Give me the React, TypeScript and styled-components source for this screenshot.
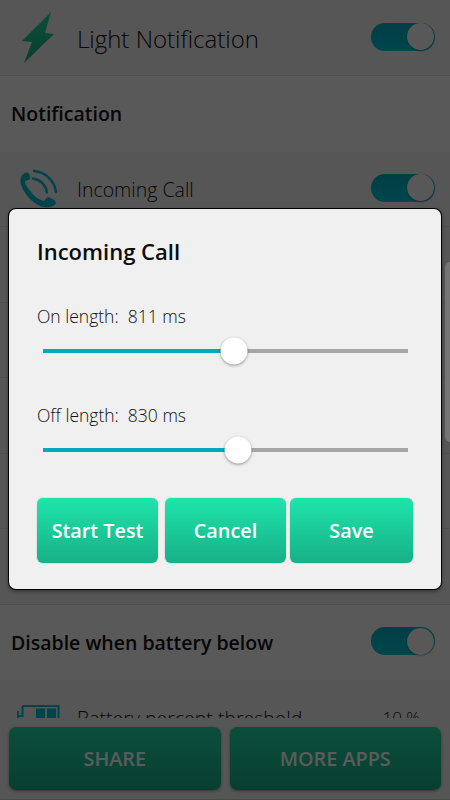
import styled, { createGlobalStyle } from "styled-components";

const GlobalStyle = createGlobalStyle`
  html, body {
    margin: 0;
    padding: 0;
    background: #f0f0f0;
  }
  * {
    box-sizing: border-box;
  }
`;

const sliders = [
  { label: "On length:  811 ms", percent: 52.2 },
  { label: "Off length:  830 ms", percent: 53.3 },
];

const hiddenRows = [0, 1, 2, 3, 4];

const BoltIcon = () => (
  <svg width="60" height="76" viewBox="0 0 60 76">
    <defs>
      <linearGradient id="bolt" x1="0" y1="0" x2="0" y2="1">
        <stop offset="0" stopColor="#1fdca6" />
        <stop offset="1" stopColor="#17ad87" />
      </linearGradient>
    </defs>
    <polygon
      points="51,12 22,41 32,42 24,63 54,34 45,33"
      fill="url(#bolt)"
    />
  </svg>
);

const PhoneIcon = () => (
  <svg width="60" height="42" viewBox="0 0 60 42">
    <path
      d="M27.5 4.5 C25 4 21.5 6.5 20.6 10.5 C19.5 15.5 23 22 27.5 28 C32 33.5 38 38 44 39 C49 39.8 55.5 38 55.8 34.7 C56 33 52 30.3 49 29.3 C47.5 28.9 46.5 30 45.4 31.3 L44.2 33 C39 32.5 33.5 27.5 29.5 22 C27 18.5 24.5 15 25 13 L27.5 12.3 C29.5 11.5 30.5 10.5 30.2 9 C29.8 7 29 5 27.5 4.5 Z"
      fill="#00bcd0"
    />
    <path
      d="M34 3 C45.5 4 54.5 12.5 56 24"
      fill="none"
      stroke="#00bcd0"
      strokeWidth="2.4"
      strokeLinecap="round"
    />
    <path
      d="M33 10.5 C40.5 11.5 46 17 47 24.5"
      fill="none"
      stroke="#00bcd0"
      strokeWidth="2.4"
      strokeLinecap="round"
    />
  </svg>
);

const BatteryIcon = () => (
  <svg width="60" height="42" viewBox="0 0 60 42">
    <path
      d="M18 15 V24 M22.5 10 V20 H18 M22.5 10 H58.5 V24"
      fill="none"
      stroke="#00bcd0"
      strokeWidth="2"
    />
    <rect x="36" y="12.5" width="9" height="12" fill="#00bcd0" />
    <rect x="47" y="12.5" width="9" height="12" fill="#00bcd0" />
  </svg>
);

export default function App() {
  return (
    <Screen>
      <GlobalStyle />
      <Content>
        <List>
          <HeaderRow>
            <IconSlot>
              <BoltIcon />
            </IconSlot>
            <HeaderTitle>Light Notification</HeaderTitle>
            <Toggle />
          </HeaderRow>
          <SectionRow>
            <SectionTitle>Notification</SectionTitle>
          </SectionRow>
          <Row>
            <IconSlot>
              <PhoneIcon />
            </IconSlot>
            <RowTitle>Incoming Call</RowTitle>
            <Toggle />
          </Row>
          {hiddenRows.map((row) => (
            <Row key={row} />
          ))}
          <SectionRow>
            <SectionTitle>Disable when battery below</SectionTitle>
            <Toggle />
          </SectionRow>
          <Row>
            <IconSlot>
              <BatteryIcon />
            </IconSlot>
            <RowTitle>Battery percent threshold</RowTitle>
            <RowValue>10 %</RowValue>
          </Row>
        </List>
        <BottomBar>
          <BarButton>SHARE</BarButton>
          <BarButton>MORE APPS</BarButton>
        </BottomBar>
      </Content>

      <Scrim>
        <Dialog>
          <DialogTitle>Incoming Call</DialogTitle>
          {sliders.map((slider) => (
            <SliderBlock key={slider.label}>
              <SliderLabel>{slider.label}</SliderLabel>
              <Track>
                <Fill style={{ width: `${slider.percent}%` }} />
                <Thumb style={{ left: `${slider.percent}%` }} />
              </Track>
            </SliderBlock>
          ))}
          <Actions>
            <ActionButton>Start Test</ActionButton>
            <ActionButton>Cancel</ActionButton>
            <ActionButton>Save</ActionButton>
          </Actions>
        </Dialog>
      </Scrim>
      <SideHandle />
    </Screen>
  );
}

const Screen = styled.div`
  position: relative;
  width: 450px;
  height: 800px;
  overflow: hidden;
  background: #f0f0f0;
  font-family: "Open Sans", "Liberation Sans", sans-serif;
  color: #111;
`;

const Content = styled.div`
  display: flex;
  flex-direction: column;
  height: 100%;
`;

const List = styled.div`
  flex: 1;
  min-height: 0;
  overflow: hidden;
`;

const HeaderRow = styled.div`
  display: flex;
  align-items: center;
  height: 76px;
  padding-right: 15px;
  border-bottom: 1px solid #dcdcdc;
`;

const SectionRow = styled.div`
  display: flex;
  align-items: center;
  height: 75.5px;
  padding: 0 15px 0 11px;
  background: #fafafa;
`;

const Row = styled.div`
  display: flex;
  align-items: center;
  height: 75.5px;
  padding-right: 15px;
  border-bottom: 1px solid #dcdcdc;
`;

const IconSlot = styled.div`
  display: flex;
  align-items: center;
  width: 77px;
  flex-shrink: 0;
`;

const HeaderTitle = styled.div`
  flex: 1;
  margin-top: 2px;
  font-size: 24px;
  font-weight: 300;
  line-height: 1;
`;

const SectionTitle = styled.div`
  flex: 1;
  font-size: 19.5px;
  font-weight: 600;
`;

const RowTitle = styled.div`
  flex: 1;
  margin-top: 2px;
  font-size: 19.5px;
  font-weight: 300;
`;

const RowValue = styled.div`
  margin-right: 15px;
  font-size: 17px;
  font-weight: 300;
`;

const Toggle = styled.div`
  position: relative;
  width: 64px;
  height: 28px;
  margin-top: -2px;
  border-radius: 14px;
  background: linear-gradient(#00aebf, #00c4d8);

  &::after {
    content: "";
    position: absolute;
    top: 0.5px;
    right: 1px;
    width: 27px;
    height: 27px;
    border-radius: 50%;
    background: #f5f5f5;
    box-shadow: 0 1px 2px rgba(0, 0, 0, 0.25);
  }
`;

const BottomBar = styled.div`
  display: flex;
  gap: 9px;
  height: 82px;
  padding: 9px;
  border-bottom: 1px solid #d0d0d0;
`;

const BarButton = styled.div`
  flex: 1;
  display: flex;
  align-items: center;
  justify-content: center;
  border-radius: 7px;
  background: linear-gradient(#1fdca6, #17ad87);
  box-shadow: 0 1px 3px rgba(0, 0, 0, 0.4);
  color: #fff;
  font-size: 19.8px;
  font-weight: 600;
`;

const Scrim = styled.div`
  position: absolute;
  inset: 0;
  display: flex;
  align-items: center;
  padding: 0 9px 2px;
  background: rgba(0, 0, 0, 0.645);
`;

const Dialog = styled.div`
  width: 100%;
  height: 380px;
  padding: 27px 28px 0;
  border-radius: 7px;
  background: #f0f0f0;
  box-shadow: 0 0 0 1px #000, 0 2px 4px rgba(0, 0, 0, 0.5);
`;

const DialogTitle = styled.div`
  margin-bottom: 38px;
  color: #0c0c0c;
  font-size: 22px;
  font-weight: 600;
  line-height: 30px;
`;

const SliderBlock = styled.div`
  height: 99px;
`;

const SliderLabel = styled.div`
  color: #111;
  font-size: 17.5px;
  font-weight: 300;
  line-height: 24px;
  white-space: pre;
`;

const Track = styled.div`
  position: relative;
  width: 365px;
  height: 4px;
  margin: 21px 0 0 6px;
  background: #a6a6a6;
`;

const Fill = styled.div`
  height: 100%;
  background: #00a8c0;
`;

const Thumb = styled.div`
  position: absolute;
  top: 50%;
  width: 27px;
  height: 27px;
  border-radius: 50%;
  background: #fff;
  box-shadow: 0 1px 3px rgba(0, 0, 0, 0.4);
  transform: translate(-50%, -50%);
`;

const Actions = styled.div`
  display: flex;
  gap: 7px;
  height: 65px;
  margin-top: -4.5px;
`;

const ActionButton = styled.div`
  display: flex;
  align-items: center;
  justify-content: center;
  width: 121px;
  border-radius: 6px;
  background: linear-gradient(#1ee4a9, #18b088);
  box-shadow: 0 0 1px rgba(0, 0, 0, 0.5);
  color: #fff;
  font-size: 19.8px;
  font-weight: 600;

  &:last-child {
    width: 123px;
    margin-left: -3px;
  }
`;

const SideHandle = styled.div`
  position: absolute;
  top: 262px;
  right: 0;
  width: 5px;
  height: 180px;
  border-radius: 8px 0 0 8px;
  background: #757575;
`;
